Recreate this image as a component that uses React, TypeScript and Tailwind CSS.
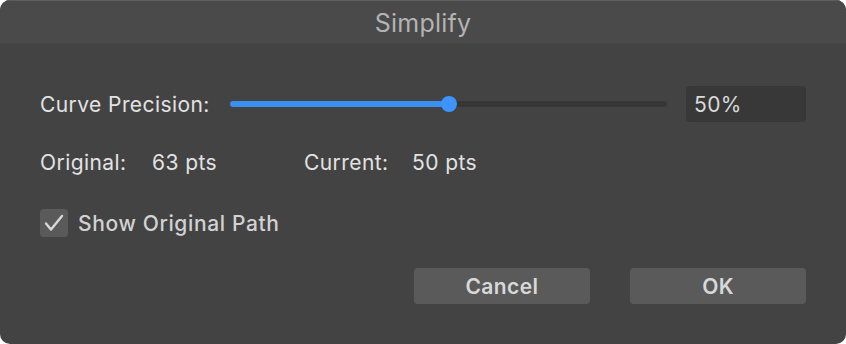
export default function App() {
  const font = { fontFamily: "Inter, 'Liberation Sans', sans-serif" };
  return (
    <div className="w-[846px] h-[344px] bg-white" style={font}>
      <div className="h-full rounded-[10px] bg-[#434343] overflow-hidden flex flex-col">
        {/* title bar */}
        <div className="h-[43px] shrink-0 bg-[#4a4a4a] border-t border-[#5e5e5e] flex items-center justify-center pt-[2px]">
          <span className="text-[25px] tracking-[0.01em] text-[#b3b3b3] leading-none">Simplify</span>
        </div>

        <div className="flex flex-col px-[40px] pt-[43px] text-[21px] tracking-[0.02em]">
          {/* precision row */}
          <div className="flex items-center h-[36px]">
            <span className="w-[190px] pt-[1px] text-[#e2e2e2]">Curve Precision:</span>
            <div className="relative w-[437px] h-[6px] rounded-full bg-[#363636]">
              <div className="absolute left-0 top-0 h-full w-[219px] rounded-full bg-[#3b8ff1]"></div>
              <div className="absolute left-[211px] top-[-5px] w-[16px] h-[16px] rounded-full bg-[#3d94ff]"></div>
            </div>
            <div className="ml-[19px] w-[120px] h-[36px] rounded-[4px] bg-[#383838] flex items-center px-[8px] pt-[1px]">
              <span className="text-[#dadada]">50%</span>
            </div>
          </div>

          {/* counts row */}
          <div className="flex items-center h-[26px] mt-[28px] text-[#e2e2e2]">
            <span className="w-[112px]">Original:</span>
            <span className="w-[152px]">63 pts</span>
            <span className="w-[108px]">Current:</span>
            <span>50 pts</span>
          </div>

          {/* checkbox row */}
          <div className="flex items-center h-[28px] mt-[33px]">
            <div className="w-[28px] h-[28px] rounded-[4px] bg-[#5a5a5a]">
              <svg width="28" height="28" viewBox="0 0 28 28" fill="none">
                <path d="M6 14.5 L11 20.5 L22 7" stroke="#d8d8d8" strokeWidth="2.4" strokeLinecap="round" strokeLinejoin="round" />
              </svg>
            </div>
            <span className="ml-[10px] pt-[1px] font-medium tracking-[0.03em] text-[#d2d2d2]">Show Original Path</span>
          </div>

          {/* buttons */}
          <div className="flex justify-end gap-[40px] mt-[31px]">
            <button className="w-[176px] h-[36px] pt-[1px] rounded-[4px] bg-[#5a5a5a] font-semibold tracking-[0.02em] text-[#d8d8d8]">
              Cancel
            </button>
            <button className="w-[176px] h-[36px] pt-[1px] rounded-[4px] bg-[#5a5a5a] font-semibold tracking-[0.02em] text-[#d8d8d8]">
              OK
            </button>
          </div>
        </div>
      </div>
    </div>
  );
}
